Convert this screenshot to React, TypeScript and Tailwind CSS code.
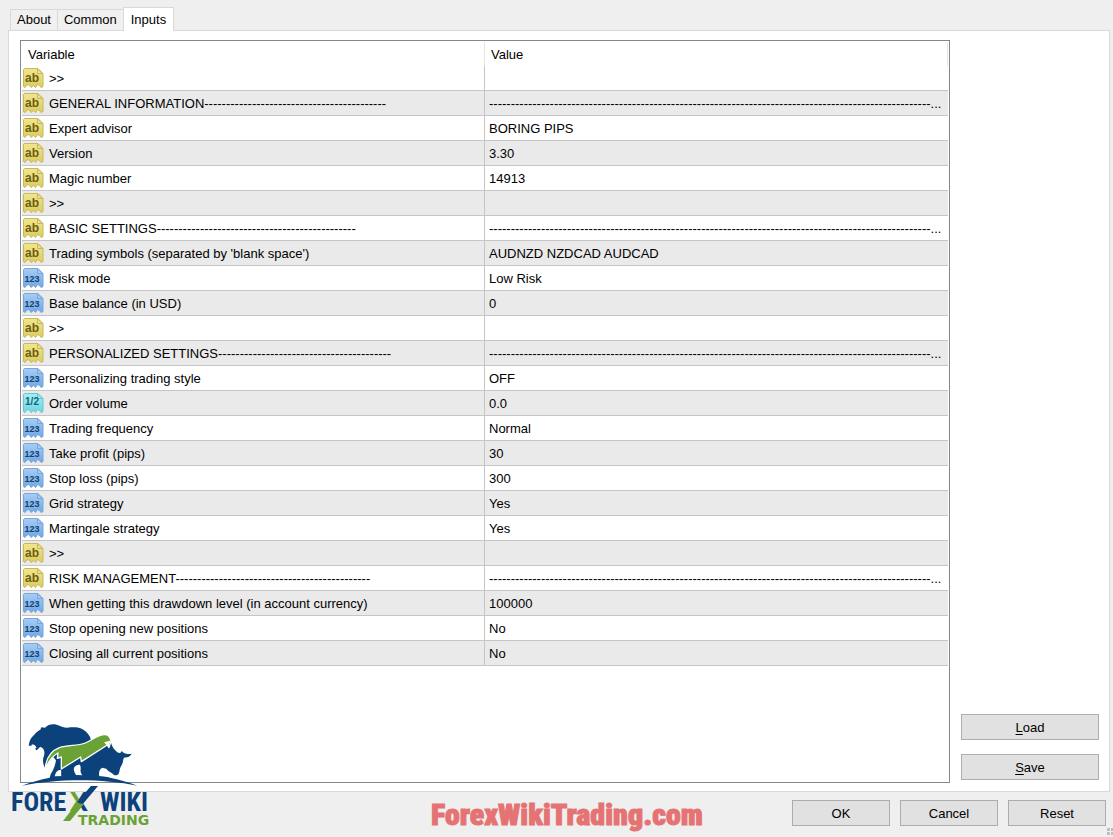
import { useState } from "react";

type Kind = "text" | "int" | "double";
type Row = { kind: Kind; name: string; value: string };

const LONG = "-".repeat(102) + "...";

const ROWS: Row[] = [
  { kind: "text", name: ">>", value: "" },
  { kind: "text", name: "GENERAL INFORMATION" + "-".repeat(42), value: LONG },
  { kind: "text", name: "Expert advisor", value: "BORING PIPS" },
  { kind: "text", name: "Version", value: "3.30" },
  { kind: "text", name: "Magic number", value: "14913" },
  { kind: "text", name: ">>", value: "" },
  { kind: "text", name: "BASIC SETTINGS" + "-".repeat(46), value: LONG },
  { kind: "text", name: "Trading symbols (separated by 'blank space')", value: "AUDNZD NZDCAD AUDCAD" },
  { kind: "int", name: "Risk mode", value: "Low Risk" },
  { kind: "int", name: "Base balance (in USD)", value: "0" },
  { kind: "text", name: ">>", value: "" },
  { kind: "text", name: "PERSONALIZED SETTINGS" + "-".repeat(40), value: LONG },
  { kind: "int", name: "Personalizing trading style", value: "OFF" },
  { kind: "double", name: "Order volume", value: "0.0" },
  { kind: "int", name: "Trading frequency", value: "Normal" },
  { kind: "int", name: "Take profit (pips)", value: "30" },
  { kind: "int", name: "Stop loss (pips)", value: "300" },
  { kind: "int", name: "Grid strategy", value: "Yes" },
  { kind: "int", name: "Martingale strategy", value: "Yes" },
  { kind: "text", name: ">>", value: "" },
  { kind: "text", name: "RISK MANAGEMENT" + "-".repeat(45), value: LONG },
  { kind: "int", name: "When getting this drawdown level (in account currency)", value: "100000" },
  { kind: "int", name: "Stop opening new positions", value: "No" },
  { kind: "int", name: "Closing all current positions", value: "No" },
];

const ICONS = {
  text: { top: "#f1e68e", bottom: "#dccd5e", edge: "#c9b75c", ink: "#6b5c14", label: "ab", size: 12, y: 15 },
  int: { top: "#a6cdf6", bottom: "#6ea8e6", edge: "#7ba6d6", ink: "#173f6b", label: "123", size: 9, y: 15 },
  double: { top: "#a5eef5", bottom: "#6bd6e4", edge: "#6cc5d1", ink: "#136672", label: "1/2", size: 10, y: 13 },
};

function TypeIcon({ kind }: { kind: Kind }) {
  const c = ICONS[kind];
  const id = "fill-" + kind;
  return (
    <svg width="22" height="22" viewBox="0 0 22 22" className="block shrink-0" aria-hidden="true">
      <defs>
        <linearGradient id={id} x1="0" y1="0" x2="0" y2="1">
          <stop offset="0" stopColor={c.top} />
          <stop offset="1" stopColor={c.bottom} />
        </linearGradient>
      </defs>
      <path
        d="M1.5 2.5 L2.5 1.5 H16 L21 6.5 V19.5 L19 20.5 L17.5 18.5 L15.5 17.5 L13.5 20.5 L11.5 18.5 L9 20.5 L7 17.5 L5 18 L3 20.5 L1.5 19.5 Z"
        fill={"url(#" + id + ")"}
        stroke={c.edge}
      />
      <path d="M15.5 2 V6.5 H20.5 Z" fill={c.top} stroke={c.edge} />
      <text
        x="10"
        y={c.y}
        textAnchor="middle"
        fontFamily="'Liberation Sans', sans-serif"
        fontWeight="700"
        fontSize={c.size}
        fill={c.ink}
      >
        {c.label}
      </text>
    </svg>
  );
}

function Logo() {
  return (
    <svg width="146" height="113" viewBox="0 0 146 113" className="block" role="img" aria-label="Forex Wiki Trading">
      <defs>
        <linearGradient id="cross" x1="0" y1="0" x2="1" y2="0">
          <stop offset="0.55" stopColor="#6aa236" />
          <stop offset="0.55" stopColor="#0b427c" />
        </linearGradient>
      </defs>
      <g transform="translate(14 -5) scale(0.3333)">
        <path
          fill="#0b427c"
          d="M26 92 C28 78 32 68 42 60 C50 50 56 46 61 44 L64 37 L75 38 C84 29 96 26 110 29 C122 32 130 38 142 38 C160 36 178 36 190 44 C202 52 210 62 213 74 L240 72 L272 78 C276 98 284 104 292 112 C298 116 306 114 304 107 L312 114 C322 118 328 117 335 116 C330 126 320 127 312 128 C308 136 310 144 304 152 C298 160 300 168 296 176 C292 182 282 182 279 177 C270 172 262 166 256 160 L248 164 C244 172 252 176 256 184 L278 192 L88 192 L92 178 C100 166 106 150 108 136 L100 126 C90 136 82 148 76 162 C70 150 66 134 72 122 C76 108 70 98 62 96 C54 98 56 104 48 106 L46 100 L50 98 L44 90 L36 88 L34 92 Z"
        />
        <path fill="#ffffff" d="M104 184 C106 174 112 164 122 164 C126 168 122 176 124 184 Z M162 158 C166 152 174 148 180 150 C186 162 176 168 188 182 L168 180 C164 172 160 166 162 158 Z M238 184 C236 172 238 162 248 158 L262 164 C256 170 268 178 270 186 Z" />
        <path
          fill="#6aa236"
          stroke="#ffffff"
          strokeWidth="4"
          strokeLinejoin="round"
          d="M75 164 C78 130 92 108 118 98 C144 88 170 94 196 84 C216 76 232 58 256 59 C268 60 272 70 273 80 L267 98 L262 90 L184 140 L182 126 L124 162 L124 126 L112 130 L114 114 C94 124 84 142 75 164 Z"
        />
        <path fill="#ffffff" d="M252 82 L271 77 L266 96 Z" />
        <path fill="#0b427c" d="M6 212 C110 170 250 170 352 212 C250 190 110 190 6 212 Z" />
      </g>
      <text x="5" y="91" fontFamily="'Roboto Condensed', Lato, sans-serif" fontWeight="700" fontSize="26" fill="#0b427c">FORE</text>
      <text x="64" y="91" fontFamily="Lato, sans-serif" fontWeight="900" fontSize="26" fill="url(#cross)">X</text>
      <path d="M85 66 H92 L76 85 L71 82 Z" fill="#0b427c" />
      <path d="M57 101 L71 83 L78 84 L64 101 Z" fill="#6aa236" />
      <text x="94" y="91" fontFamily="'Roboto Condensed', Lato, sans-serif" fontWeight="700" fontSize="26" fill="#0b427c">WIKI</text>
      <text x="72" y="105" fontFamily="'DejaVu Sans', sans-serif" fontWeight="700" fontSize="14" fill="#6aa236">TRADING</text>
    </svg>
  );
}

function PushButton({ children, className }: { children: React.ReactNode; className: string }) {
  return (
    <button
      type="button"
      className={"flex h-[26px] items-center justify-center border border-[#adadad] bg-[#e1e1e1] pt-px hover:border-[#0078d7] hover:bg-[#e5f1fb] " + className}
    >
      {children}
    </button>
  );
}

const TABS = ["About", "Common", "Inputs"];

export default function App() {
  const [tab, setTab] = useState("Inputs");
  return (
    <main className="relative flex min-h-screen flex-col bg-[#efefef] pt-[7px] font-['Liberation_Sans',Arial,sans-serif] text-[13px] leading-4 text-black">
      <div role="tablist" className="flex items-end pl-[10px]">
        {TABS.map((t) => (
          <button
            key={t}
            type="button"
            role="tab"
            aria-selected={t === tab}
            onClick={() => setTab(t)}
            className={
              t === tab
                ? "relative z-10 -mb-px h-6 border border-b-0 border-[#d9d9d9] bg-white px-[7px]"
                : "mt-[2px] h-[21px] border border-r-0 border-b-0 border-[#d9d9d9] bg-[#f0f0f0] px-[6px]"
            }
          >
            {t}
          </button>
        ))}
      </div>

      <section className="mr-[3px] ml-2 flex flex-1 gap-[11px] border border-[#d9d9d9] bg-white pt-[9px] pr-[10px] pb-2 pl-[11px]">
        <div className="min-w-0 flex-1 border border-[#828790] px-px pt-px">
          <table className="w-full table-fixed border-separate border-spacing-0 text-left">
            <colgroup>
              <col className="w-1/2" />
              <col className="w-1/2" />
            </colgroup>
            <thead>
              <tr className="h-6">
                <th className="border-r border-[#e5e5e5] p-0 pt-[2px] pl-[6px] font-normal">Variable</th>
                <th className="border-r border-[#e5e5e5] p-0 pt-[2px] pl-[6px] font-normal">Value</th>
              </tr>
            </thead>
            <tbody>
              {ROWS.map((r, i) => (
                <tr key={i} className="h-[25px] even:bg-[#eaeaea]">
                  <td className="border-r border-b border-[#c5c5c5] p-0">
                    <div className="flex items-center gap-[5px] whitespace-nowrap">
                      <TypeIcon kind={r.kind} />
                      <span className="pt-[2px]">{r.name}</span>
                    </div>
                  </td>
                  <td className="border-b border-[#c5c5c5] p-0 pt-[2px] pl-1 whitespace-nowrap">{r.value}</td>
                </tr>
              ))}
            </tbody>
          </table>
        </div>
        <div className="flex w-[138px] flex-col justify-end gap-[14px] pb-[3px]">
          <PushButton className="w-full">
            <span><u className="underline-offset-2">L</u>oad</span>
          </PushButton>
          <PushButton className="w-full">
            <span><u className="underline-offset-2">S</u>ave</span>
          </PushButton>
        </div>
      </section>

      <footer className="flex h-[45px] items-start justify-end gap-[10px] pt-2 pr-[7px]">
        <PushButton className="w-[98px]">OK</PushButton>
        <PushButton className="w-[98px]">Cancel</PushButton>
        <PushButton className="w-[98px]">Reset</PushButton>
      </footer>

      <div className="pointer-events-none absolute bottom-1 left-[431px] font-['Roboto_Condensed','Liberation_Sans',sans-serif] text-[30px] leading-9 font-black whitespace-nowrap text-[#e57373] [-webkit-text-stroke:1px_#e57373]">
        ForexWikiTrading.com
      </div>
      <div className="pointer-events-none absolute bottom-1 left-[6px]">
        <Logo />
      </div>
      <svg width="6" height="7" viewBox="0 0 6 7" className="pointer-events-none absolute right-0 bottom-[2px]" aria-hidden="true">
        <path d="M0 0h3v3H0zM4 0h2v3H4zM0 4h3v3H0zM4 4h2v3H4z" fill="#bfbfbf" />
      </svg>
    </main>
  );
}
